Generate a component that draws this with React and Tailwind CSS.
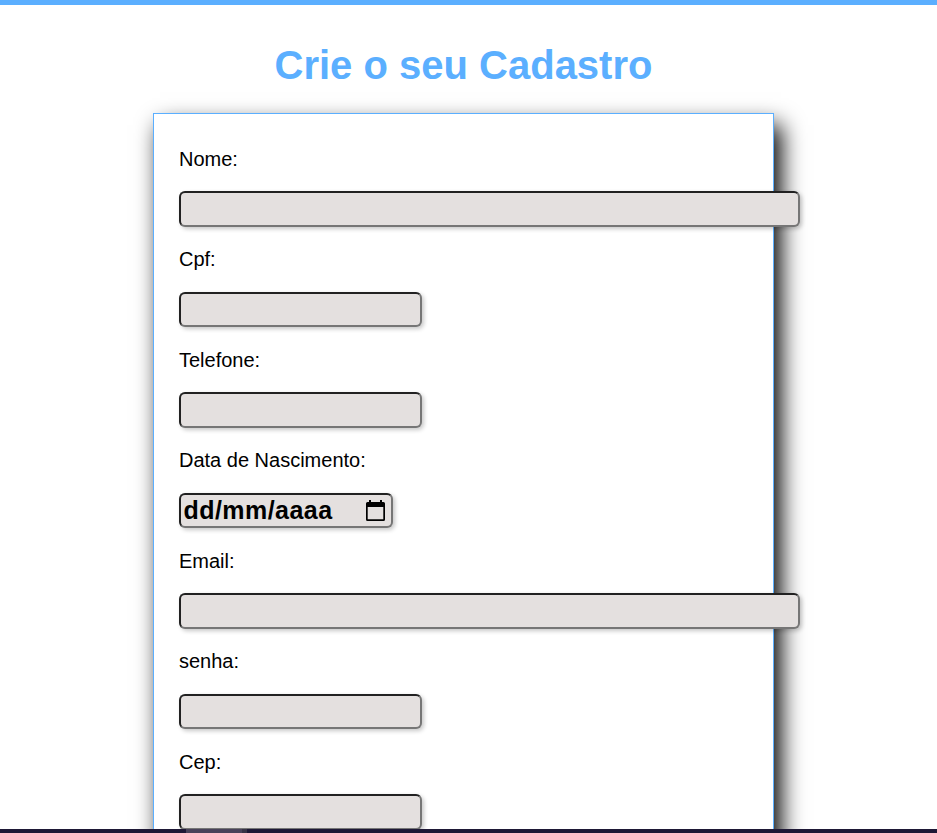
const fields = [
  { label: 'Nome:', width: 'w-[621px]' },
  { label: 'Cpf:', width: 'w-[243px]' },
  { label: 'Telefone:', width: 'w-[243px]' },
  { label: 'Data de Nascimento:', width: 'w-[214px]', date: true },
  { label: 'Email:', width: 'w-[621px]' },
  { label: 'senha:', width: 'w-[243px]' },
  { label: 'Cep:', width: 'w-[243px]' },
];

function CalendarIcon() {
  return (
    <svg width="19" height="21" viewBox="0 0 19 21" className="mb-px shrink-0">
      <path
        fillRule="evenodd"
        d="M3 0h2v2h9V0h2v2h1.500a1.500 1.500 0 0 1 1.500 1.500v16a1.500 1.500 0 0 1-1.500 1.500h-16A1.500 1.500 0 0 1 0 19.500v-16A1.500 1.500 0 0 1 1.500 2H3zM1.700 7v12.300h15.600V7z"
      />
    </svg>
  );
}

function Field({ label, width, date }) {
  return (
    <div className="h-[100.5px] shrink-0">
      <div className="h-[46.4px] pt-[2.9px] text-[20px] leading-[23px] whitespace-nowrap">{label}</div>
      <div
        className={`${width} flex h-[35.5px] items-center justify-between rounded-[6px] border-2 border-t-[#212121] border-l-[#212121] border-r-[#767676] border-b-[#767676] bg-[#e4e0df] pr-[6px] pl-[2.5px] shadow-[2px_2px_4px_rgba(0,0,0,0.22)]`}
      >
        {date && (
          <>
            <span className="pb-[2px] text-[25px] leading-[28px] font-bold tracking-[0.45px]">dd/mm/aaaa</span>
            <CalendarIcon />
          </>
        )}
      </div>
    </div>
  );
}

export default function App() {
  return (
    <div className="flex h-[833px] w-[937px] flex-col overflow-hidden bg-white font-['Liberation_Sans',Arial,sans-serif] text-black">
      <div className="h-[5px] shrink-0 bg-[#5bafff]" />
      <main className="flex h-[824px] flex-col overflow-hidden">
        <h1 className="h-[108px] shrink-0 pt-[37px] pr-[10px] text-center text-[40px] leading-[46px] font-bold text-[#5bafff]">
          Crie o seu Cadastro
        </h1>
        <form className="ml-[153px] flex h-[760px] w-[621px] shrink-0 flex-col border border-[#5bafff] bg-white pt-[31px] pl-[25px] shadow-[7px_12px_22px_#000]">
          {fields.map((field) => (
            <Field key={field.label} {...field} />
          ))}
        </form>
      </main>
      <footer className="flex h-[4px] shrink-0 bg-[#1e1836]">
        <div className="ml-[186px] w-[56px] bg-[#49425a]" />
        <div className="w-[5px] bg-[#383346]" />
      </footer>
    </div>
  );
}
